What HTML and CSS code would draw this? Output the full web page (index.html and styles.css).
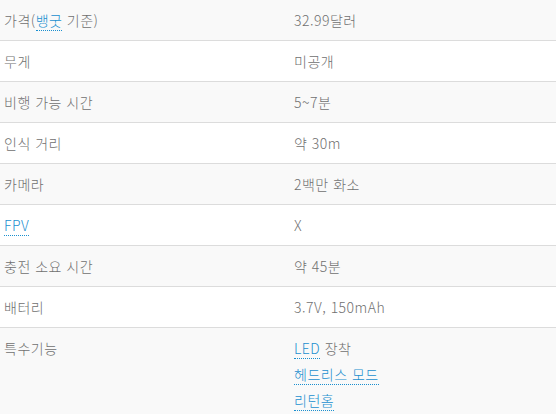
FILE: index.html
```html
<!DOCTYPE html>
<html lang="ko">
<head>
<meta charset="utf-8">
<link rel="stylesheet" href="styles.css">
</head>
<body>
<table class="spec">
  <tr><td class="k">가격(<a class="lk">뱅굿</a> 기준)</td><td class="v">32.99달러</td></tr>
  <tr><td class="k">무게</td><td class="v">미공개</td></tr>
  <tr><td class="k">비행 가능 시간</td><td class="v">5~7분</td></tr>
  <tr><td class="k">인식 거리</td><td class="v">약 30m</td></tr>
  <tr><td class="k">카메라</td><td class="v">2백만 화소</td></tr>
  <tr><td class="k"><a class="lk">FPV</a></td><td class="v">X</td></tr>
  <tr><td class="k">충전 소요 시간</td><td class="v">약 45분</td></tr>
  <tr><td class="k">배터리</td><td class="v">3.7V, 150mAh</td></tr>
  <tr><td class="k">특수기능</td><td class="v"><a class="lk">LED</a> 장착<br><a class="lk">헤드리스 모드</a><br><a class="lk">리턴홈</a></td></tr>
</table>
</body>
</html>
```
FILE: styles.css
```css
html, body {
  margin: 0;
  padding: 0;
  background: #fff;
}
body {
  font-family: "Noto Sans CJK KR", "Noto Sans", sans-serif;
  font-size: 14px;
  font-weight: 300;
  color: #707070;
}
.spec {
  width: 556px;
  border-collapse: collapse;
}
.spec tr {
  border-bottom: 1px solid #dcdcdc;
}
.spec tr:nth-child(odd) {
  background: #f9f9f9;
}
.spec td {
  vertical-align: top;
  padding: 7px 0 7px 4px;
  line-height: 26px;
  height: 26px;
}
.spec td.k {
  width: 290px;
  letter-spacing: 0.5px;
}
.spec td.v {
  padding-left: 0;
  letter-spacing: 0.5px;
}
.lk {
  color: #1a8fcf;
  text-decoration: none;
  border-bottom: 1px dotted #1a8fcf;
}
```
